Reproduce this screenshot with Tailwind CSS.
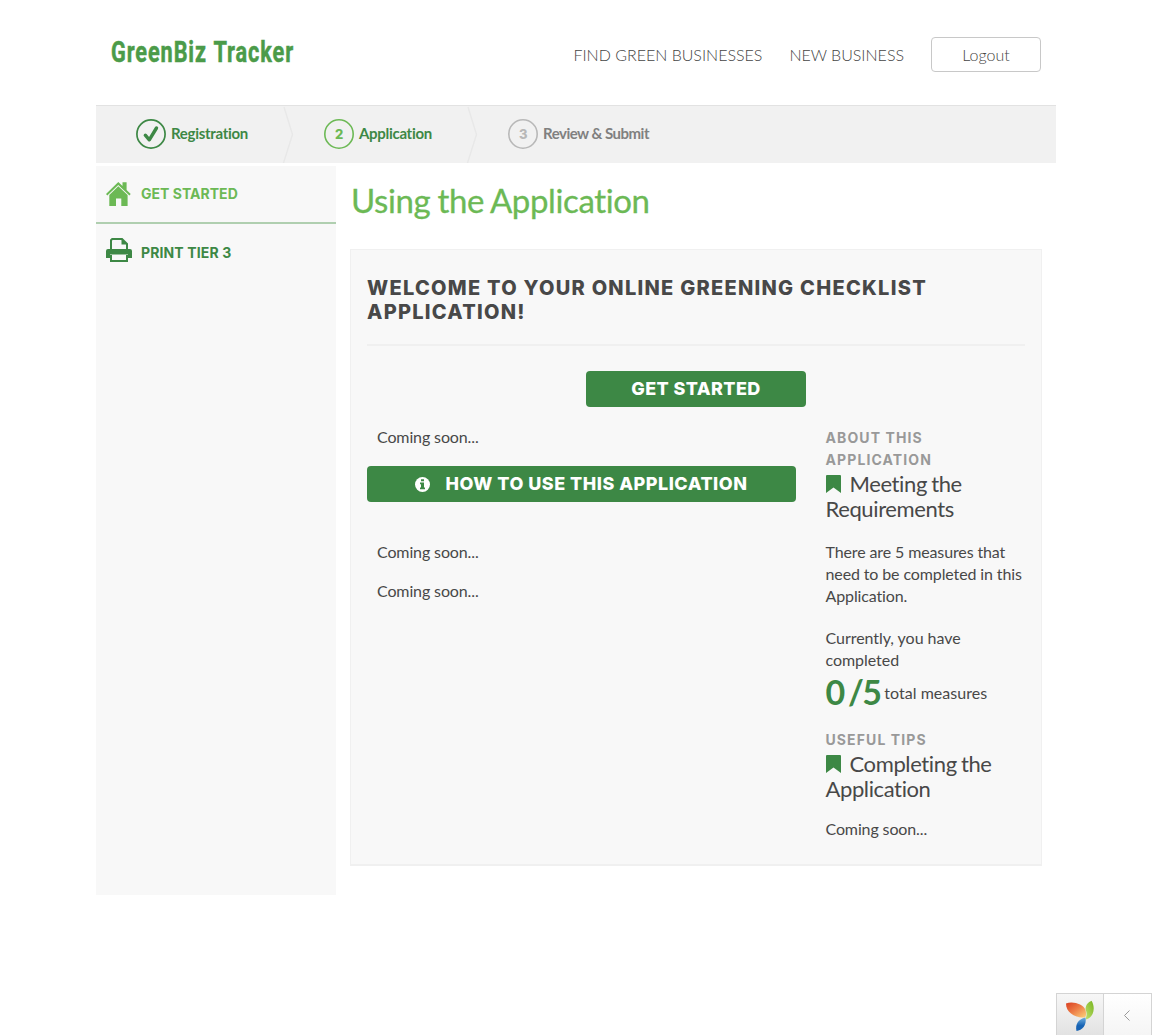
<!DOCTYPE html>
<html lang="en">
<head>
<meta charset="utf-8">
<title>GreenBiz Tracker</title>
<script src="https://cdn.jsdelivr.net/npm/@tailwindcss/browser@4"></script>
</head>
<body class="relative h-[1035px] overflow-hidden bg-white font-['Lato',sans-serif] text-[16px] leading-[22px] tracking-[-0.12px] text-[#484848] [font-variant-ligatures:none]">
<div class="mx-auto w-[960px]">
  <header class="flex h-[105px] items-start justify-between pr-[15px] pl-[14px]">
    <svg class="mt-[32px] block overflow-visible" width="200" height="40" role="img" aria-label="GreenBiz Tracker">
      <text x="1" y="29.500" textLength="183" lengthAdjust="spacingAndGlyphs" font-family="Roboto, sans-serif" font-weight="700" font-size="29" letter-spacing="1.200" word-spacing="1" fill="#4b9b49" stroke="#4b9b49" stroke-width=".5">GreenBiz Tracker</text>
    </svg>
    <nav class="mt-[37px] flex items-center text-[16px] font-light tracking-normal text-[#444]">
      <a class="mr-[27px]">FIND GREEN BUSINESSES</a>
      <a class="mr-[27px]">NEW BUSINESS</a>
      <a class="flex h-[35px] w-[110px] items-center justify-center rounded-[4px] border border-[#c8c8c8] pt-px">Logout</a>
    </nav>
  </header>

  <ol class="flex h-[58px] border-t border-[#e2e2e2] bg-[#f1f1f1] text-[15px] font-bold tracking-[-0.3px] text-[#3d8845]">
    <li class="flex w-[187px] items-center pb-px pl-[40px]">
      <svg class="mr-[5px]" width="30" height="30" viewBox="0 0 30 30" fill="none" stroke="#3d8845"><circle cx="15" cy="15" r="14.1" stroke-width="1.7"/><path d="M9.300 16.200l4 4.600L20.500 9" stroke-width="3.400" stroke-linecap="round" stroke-linejoin="round"/></svg>
      <span class="-mt-[3px]">Registration</span>
    </li>
    <li class="flex w-[184px] items-center pb-px">
      <svg class="-ml-px" width="12" height="57" viewBox="0 0 12 57" fill="none" stroke="#e8e8e8" stroke-width="1.400"><path d="M2 1l8.500 27.500L1.500 57"/></svg>
      <svg class="mr-[5px] ml-[30px]" width="30" height="30" viewBox="0 0 30 30"><circle cx="15" cy="15" r="14.200" fill="none" stroke="#6cb955" stroke-width="1.600"/><text x="15" y="19.500" text-anchor="middle" font-family="Inter, sans-serif" font-size="13" font-weight="800" fill="#6cb955">2</text></svg>
      <span class="-mt-[3px]">Application</span>
    </li>
    <li class="flex items-center pb-px">
      <svg class="-ml-px" width="12" height="57" viewBox="0 0 12 57" fill="none" stroke="#e8e8e8" stroke-width="1.400"><path d="M2 1l8.500 27.500L1.500 57"/></svg>
      <svg class="mr-[5px] ml-[30px]" width="30" height="30" viewBox="0 0 30 30"><circle cx="15" cy="15" r="14.200" fill="none" stroke="#b8b8b8" stroke-width="1.600"/><text x="15" y="19.500" text-anchor="middle" font-family="Inter, sans-serif" font-size="13" font-weight="800" fill="#b8b8b8">3</text></svg>
      <span class="-mt-[3px] tracking-[-0.5px] text-[#808080]">Review &amp; Submit</span>
    </li>
  </ol>

  <div class="mt-[3px] flex">
    <aside class="h-[729px] w-[240px] bg-[#f8f8f8] font-['Inter',sans-serif] text-[14px] font-bold">
      <a class="flex h-[58px] items-center border-b-2 border-[#b0cfb0] pl-[10px] text-[#6cb955]">
        <svg class="mr-[10px]" width="25" height="26" viewBox="0 0 25 26" fill="#6cb955"><path d="M12.300 1L16.500 5V1.200h4.100V9l4.100 4-1.300 1.400L12.300 3.900 1.300 14.400 0 13z"/><path d="M12.300 5.200l9.300 8.800V25h-6.300v-7.500H10V25H3.300V14z"/></svg>
        <span class="tracking-[0.02px]">GET STARTED</span>
      </a>
      <a class="flex h-[58px] items-center pl-[10px] text-[#3d8845]">
        <svg class="mr-[9px] -mt-[6px]" width="26" height="26" viewBox="0 0 26 26"><path d="M5 12V3.200L6.200 2H16l5 5v5" fill="none" stroke="#3d8845" stroke-width="2"/><path d="M15.500 2v5.500H21z" fill="#3d8845"/><path d="M2 12h22a2 2 0 012 2v7h-4v-3.500H4V21H0v-7a2 2 0 012-2z" fill="#3d8845"/><path d="M5 18v6h16v-6" fill="none" stroke="#3d8845" stroke-width="2"/></svg>
        <span class="tracking-[0.12px]">PRINT TIER 3</span>
      </a>
    </aside>

    <main class="ml-[14px] w-[692px]">
      <h1 class="mt-[14px] h-[69px] pl-[1px] text-[33px] leading-[40px] tracking-[-0.38px] text-[#6cb955] [-webkit-text-stroke:0.3px_#6cb955] [word-spacing:-1px]">Using the Application</h1>
      <section class="h-[617px] border border-b-2 border-[#f0f0f0] bg-[#f8f8f8] px-[16px]">
        <h2 class="mt-[26px] border-b-2 border-[#f0f0f0] pb-[20px] font-['Inter',sans-serif] text-[20px] leading-[24px] font-extrabold tracking-[1.27px]">WELCOME TO YOUR ONLINE GREENING CHECKLIST APPLICATION!</h2>
        <a class="mx-auto mt-[25px] flex h-[36px] w-[220px] items-center justify-center rounded-[4px] bg-[#3d8845] font-['Inter',sans-serif] text-[18px] font-extrabold tracking-[0.4px] text-white">GET STARTED</a>
        <div class="mt-[20px] flex">
          <div class="w-[429px] shrink-0">
            <p class="-mt-px pl-[10px]">Coming soon...</p>
            <a class="mt-[18px] flex h-[36px] items-center justify-center rounded-[4px] bg-[#3d8845] pr-px font-['Inter',sans-serif] text-[18px] font-extrabold tracking-[0.5px] text-white">
              <svg class="mr-[16px]" width="15" height="15" viewBox="0 0 15 15"><circle cx="7.500" cy="7.500" r="7.500" fill="#fff"/><path d="M6 2.300h3v2H6zM5 5.500h4v5h1v1.800H5v-1.800h1V7.300H5z" fill="#3d8845"/></svg>
              <span>HOW TO USE THIS APPLICATION</span>
            </a>
            <p class="mt-[39px] pl-[10px]">Coming soon...</p>
            <p class="mt-[17px] pl-[10px]">Coming soon...</p>
          </div>
          <div class="ml-[29.500px] w-[199.500px] shrink-0">
            <h3 class="font-['Inter',sans-serif] text-[14px] font-bold tracking-[1.1px] text-[#999]">ABOUT THIS APPLICATION</h3>
            <h4 class="text-[22px] leading-[25px] tracking-[-0.38px] [word-spacing:-1px]"><svg class="mr-[9px] inline-block align-[-1px]" width="15" height="18" viewBox="0 0 15 18" fill="#3d8845"><path d="M1 0h13q1 0 1 1v17l-7.500-5.500L0 18V1q0-1 1-1z"/></svg>Meeting the Requirements</h4>
            <p class="mt-[20px] tracking-[-0.12px]">There are 5 measures that need to be completed in this Application.</p>
            <p class="mt-[20px] tracking-[-0.04px]">Currently, you have completed</p>
            <p class="flex h-[42px] items-start"><span class="mr-[4px] text-[34px] leading-[42px] font-bold tracking-[-1.7px] text-[#3d8845] [word-spacing:-2px]">0 /5</span><span class="mt-[11px] tracking-[0.04px]">total measures</span></p>
            <h3 class="mt-[16px] font-['Inter',sans-serif] text-[14px] font-bold tracking-[1.1px] text-[#999]">USEFUL TIPS</h3>
            <h4 class="text-[22px] leading-[25px] tracking-[-0.38px] [word-spacing:-1px]"><svg class="mr-[9px] inline-block align-[-1px]" width="15" height="18" viewBox="0 0 15 18" fill="#3d8845"><path d="M1 0h13q1 0 1 1v17l-7.500-5.500L0 18V1q0-1 1-1z"/></svg>Completing the Application</h4>
            <p class="mt-[17px]">Coming soon...</p>
          </div>
        </div>
      </section>
    </main>
  </div>
</div>

<div class="absolute right-0 bottom-0 flex h-[42px] w-[96px] border-t border-l border-[#d4d4d4]">
  <div class="flex w-[47px] items-center justify-center border-r border-[#d4d4d4] bg-linear-to-b from-[#f7f7f7] to-[#e2e2e2] pt-[2px]">
    <svg width="30" height="32" viewBox="0 0 30 32">
      <defs>
        <linearGradient id="o" x1="0" y1="0" x2="1" y2="1"><stop offset="0" stop-color="#d93e21"/><stop offset=".5" stop-color="#ee8048"/><stop offset="1" stop-color="#fbd37c"/></linearGradient>
        <linearGradient id="g" x1="1" y1="0" x2="0" y2="1"><stop offset="0" stop-color="#78b51f"/><stop offset="1" stop-color="#c0df70"/></linearGradient>
        <linearGradient id="b" x1="0" y1="0" x2="0" y2="1"><stop offset="0" stop-color="#6fb0e0"/><stop offset=".6" stop-color="#1763b4"/></linearGradient>
      </defs>
      <path d="M1 3.500C8 1 18 4 20.500 10c1 4 .6 6-.5 7.500C9 18 1 12 1 3.500z" fill="url(#o)"/>
      <path d="M26.500.8C31 8 28.500 18 20.500 19.500c2-6 1-7 0-10.500C21 4.500 23 2.500 26.500.8z" fill="url(#g)"/>
      <path d="M20.500 17.500C22 25 17 30.500 11.500 31 10 25 13 19 20.500 17.500z" fill="url(#b)"/>
    </svg>
  </div>
  <div class="flex flex-1 items-center justify-center border-r border-[#d4d4d4] bg-linear-to-b from-white to-[#f5f5f5] pt-[2px] pr-px">
    <svg width="6" height="11" viewBox="0 0 6 11" fill="none" stroke="#999" stroke-width="1"><path d="M5.500.5l-5 5 5 5"/></svg>
  </div>
</div>
</body>
</html>
